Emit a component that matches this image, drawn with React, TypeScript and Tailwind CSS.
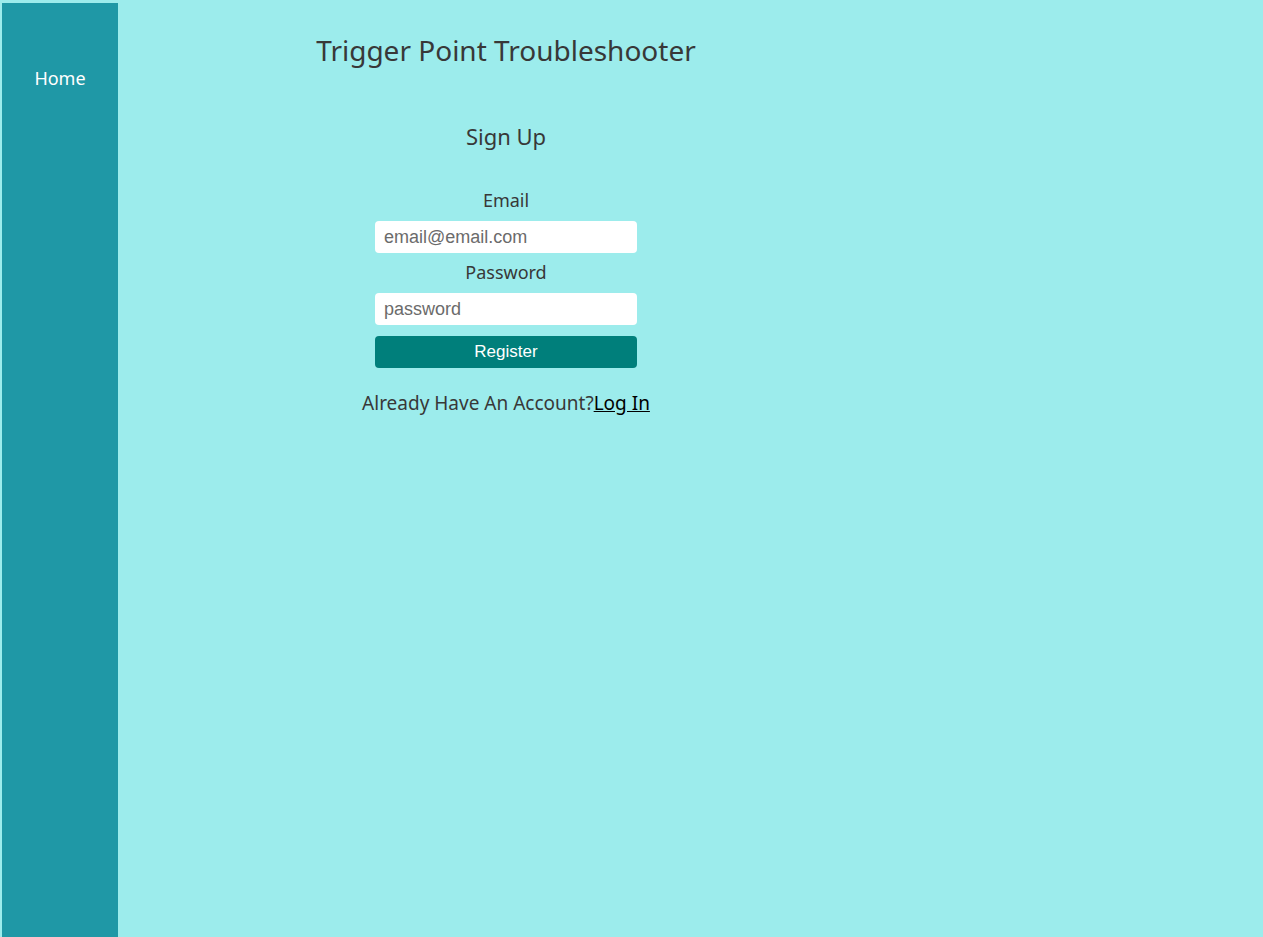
import React from "react";

export default function App() {
  const q = { fontFamily: '"Noto Sans", sans-serif' };
  return (
    <div className="flex min-h-[937px] w-full bg-[#9cecec]" style={q}>
      <nav className="mt-[3px] ml-[2px] flex w-[116px] shrink-0 flex-col items-center bg-[#1f98a6] pt-[63px]">
        <a className="text-[18px] leading-[24px] text-white">Home</a>
      </nav>
      <main className="flex w-[776px] flex-col items-center">
        <h1 className="mt-[31px] text-[28px] leading-[38px] text-[#383838]">Trigger Point Troubleshooter</h1>
        <h2 className="mt-[52px] text-[22px] leading-[30px] text-[#383838]">Sign Up</h2>
        <form className="mt-[37px] flex flex-col items-center">
          <label className="text-[18px] leading-[24px] text-[#383838]">Email</label>
          <input
            className="mt-[9px] h-[32px] w-[262px] rounded-[4px] bg-white px-[9px] text-[18px] text-[#333] placeholder:text-[#6b6b6b] outline-none"
            style={{ fontFamily: '"Liberation Sans", Arial, sans-serif' }}
            placeholder="email@email.com"
          />
          <label className="mt-[7px] text-[18px] leading-[24px] text-[#383838]">Password</label>
          <input
            className="mt-[9px] h-[32px] w-[262px] rounded-[4px] bg-white px-[9px] text-[18px] text-[#333] placeholder:text-[#6b6b6b] outline-none"
            style={{ fontFamily: '"Liberation Sans", Arial, sans-serif' }}
            placeholder="password"
          />
          <button
            type="button"
            className="mt-[11px] h-[32px] w-[262px] rounded-[4px] bg-[#007f7b] text-[17px] text-white"
            style={{ fontFamily: '"Liberation Sans", Arial, sans-serif' }}
          >
            Register
          </button>
          <p className="mt-[23px] text-[19px] leading-[24px] text-[#383838]">
            Already Have An Account?<a className="text-black underline">Log In</a>
          </p>
        </form>
      </main>
    </div>
  );
}
